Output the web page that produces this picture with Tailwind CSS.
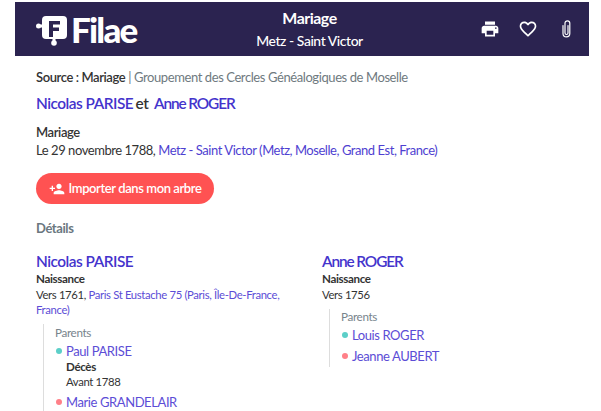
<!DOCTYPE html>
<html lang="fr">
<head>
    <meta charset="UTF-8">
    <title>Filae - Mariage</title>
    <script src="https://cdn.jsdelivr.net/npm/@tailwindcss/browser@4"></script>
</head>
<body class="bg-white font-['Lato',sans-serif] text-[#333] overflow-hidden h-[411px]">
    <!-- Header -->
    <header class="mt-[2px] ml-[15px] w-[574px] h-[54px] bg-[#2b2350] text-white flex items-center pl-[21px] pr-[18px]">
        <div class="flex items-center w-[103px]">
            <svg class="w-[32px] h-[31px] shrink-0 mt-[2px]" viewBox="0 0 32 31" fill="#fff">
                <circle cx="2.500" cy="11" r="2.500"/>
                <rect x="3" y="9.500" width="4" height="3"/>
                <circle cx="18" cy="28" r="2.800"/>
                <rect x="16.500" y="23" width="3" height="4"/>
                <rect x="6" y="1" width="25" height="23" rx="4"/>
                <path fill="#2b2350" d="M13 6h11v3.500h-7v3h6V16h-6v6h-4z"/>
            </svg>
            <span class="ml-[3px] text-[35px] leading-none font-black tracking-[-1.800px]">Filae</span>
        </div>
        <div class="flex-1 text-center">
            <div class="text-[15.900px] leading-[20px] font-bold tracking-[-0.030em]">Mariage</div>
            <div class="text-[13.900px] leading-[20px] mt-[3px] font-medium tracking-[-0.030em]">Metz - Saint Victor</div>
        </div>
        <div class="flex items-center">
            <svg class="w-[20px] h-[20px]" viewBox="0 0 24 24" fill="#fff"><path d="M19 8H5c-1.660 0-3 1.340-3 3v6h4v4h12v-4h4v-6c0-1.660-1.340-3-3-3zm-3 11H8v-5h8v5zm3-7c-.550 0-1-.450-1-1s.450-1 1-1 1 .450 1 1-.450 1-1 1zm-1-9H6v4h12V3z"/></svg>
            <svg class="w-[20px] h-[20px] ml-[18px]" viewBox="0 0 24 24" fill="#fff"><path d="M16.500 3c-1.740 0-3.410.810-4.500 2.090C10.910 3.810 9.240 3 7.500 3 4.420 3 2 5.420 2 8.500c0 3.780 3.400 6.860 8.550 11.540L12 21.350l1.450-1.320C18.600 15.360 22 12.280 22 8.500 22 5.420 19.580 3 16.500 3zm-4.400 15.550l-.100.100-.100-.100C7.140 14.240 4 11.390 4 8.500 4 6.500 5.500 5 7.500 5c1.540 0 3.040.990 3.570 2.360h1.870C13.460 5.990 14.960 5 16.500 5c2 0 3.500 1.500 3.500 3.500 0 2.890-3.140 5.740-7.900 10.050z"/></svg>
            <svg class="w-[9px] h-[18px] ml-[24px]" viewBox="0 0 9 18" fill="none" stroke="#fff" stroke-width="1.200" stroke-linecap="round"><path d="M6 5.500V13a1.500 1.500 0 0 1-3 0V3.200a2.400 2.400 0 0 1 4.800 0v10.300a3.400 3.400 0 0 1-6.800 0V5.500"/></svg>
        </div>
    </header>

    <main class="pl-[36px] pr-[15px]">
        <p class="mt-[12px] text-[13px] leading-[18px] tracking-[-0.410px] text-[#6f7a80]"><span class="font-semibold text-[#333]">Source : Mariage</span> | Groupement des Cercles Généalogiques de Moselle</p>
        <p class="mt-[7px] text-[15.400px] leading-[20px] tracking-[-0.500px] font-semibold text-[#333]"><a class="text-[#4433cc]" href="#">Nicolas PARISE</a> <span class="ml-[-1px]">et</span>&nbsp; <a class="ml-[-1px] text-[#4433cc] tracking-[-1.100px]" href="#">Anne ROGER</a></p>

        <h3 class="mt-[10px] text-[13px] leading-[18px] tracking-[-0.410px] font-semibold">Mariage</h3>
        <p class="text-[13px] leading-[18px] tracking-[-0.450px]">Le 29 novembre 1788, <a class="text-[#4f3fd1]" href="#">Metz - Saint Victor (Metz, Moselle, Grand Est, France)</a></p>

        <button class="mt-[14px] h-[31px] w-[178px] rounded-full bg-[#ff5252] text-white text-[13px] tracking-[-0.410px] font-semibold flex items-center justify-center gap-[4px]">
            <svg class="w-[16px] h-[16px]" viewBox="0 0 24 24" fill="#fff"><path d="M15 12c2.210 0 4-1.790 4-4s-1.790-4-4-4-4 1.790-4 4 1.790 4 4 4zm-9-2V7H4v3H1v2h3v3h2v-3h3v-2H6zm9 4c-2.670 0-8 1.340-8 4v2h16v-2c0-2.660-5.330-4-8-4z"/></svg>
            Importer dans mon arbre
        </button>

        <h2 class="mt-[14px] text-[13px] leading-[20px] tracking-[-0.410px] font-bold text-[#6b7780]">Détails</h2>

        <div class="mt-[13px] flex">
            <section class="w-[286px]">
                <a class="block text-[15.400px] leading-[20px] tracking-[-0.500px] font-semibold text-[#4433cc]" href="#">Nicolas PARISE</a>
                <h4 class="text-[11.600px] leading-[15px] tracking-[-0.360px] font-bold">Naissance</h4>
                <p class="text-[11.300px] leading-[15px] tracking-[-0.350px] mt-[1px] w-[250px]">Vers 1761, <a class="text-[#5c4dd6]" href="#">Paris St Eustache 75 (Paris, Île-De-France, France)</a></p>
                <div class="mt-[7px] ml-[7px] border-l border-[#ddd] pl-[11px] pt-[1px]">
                    <div class="text-[11.700px] leading-[15px] tracking-[-0.360px] text-[#78848c]">Parents</div>
                    <div class="mt-[2px] flex items-center gap-[4px] text-[13px] leading-[18px] tracking-[-0.410px] text-[#5c4dd6]"><span class="w-[6px] h-[6px] rounded-full bg-[#5ccfc8] ml-[1px]"></span>Paul PARISE</div>
                    <div class="ml-[11px] text-[11.600px] leading-[15px] tracking-[-0.360px] font-bold mt-[-1px]">Décès</div>
                    <div class="ml-[11px] text-[11.300px] leading-[15px] tracking-[-0.350px]">Avant 1788</div>
                    <div class="mt-[4px] flex items-center gap-[4px] text-[13px] leading-[18px] tracking-[-0.410px] text-[#5c4dd6]"><span class="w-[6px] h-[6px] rounded-full bg-[#ff8088] ml-[1px]"></span>Marie GRANDELAIR</div>
                </div>
            </section>
            <section>
                <a class="block text-[15.400px] leading-[20px] tracking-[-1.100px] font-semibold text-[#4433cc]" href="#">Anne ROGER</a>
                <h4 class="text-[11.600px] leading-[15px] tracking-[-0.360px] font-bold">Naissance</h4>
                <p class="text-[11.300px] leading-[15px] tracking-[-0.350px] mt-[1px]">Vers 1756</p>
                <div class="mt-[7px] ml-[7px] border-l border-[#ddd] pl-[11px] pb-[2px]">
                    <div class="text-[11.700px] leading-[15px] tracking-[-0.360px] text-[#78848c]">Parents</div>
                    <div class="mt-[2px] flex items-center gap-[4px] text-[13px] leading-[18px] tracking-[-0.410px] text-[#5c4dd6]"><span class="w-[6px] h-[6px] rounded-full bg-[#5ccfc8] ml-[1px]"></span>Louis ROGER</div>
                    <div class="mt-[3px] flex items-center gap-[4px] text-[13px] leading-[18px] tracking-[-0.410px] text-[#5c4dd6]"><span class="w-[6px] h-[6px] rounded-full bg-[#ff8088] ml-[1px]"></span>Jeanne AUBERT</div>
                </div>
            </section>
        </div>
    </main>
</body>
</html>
